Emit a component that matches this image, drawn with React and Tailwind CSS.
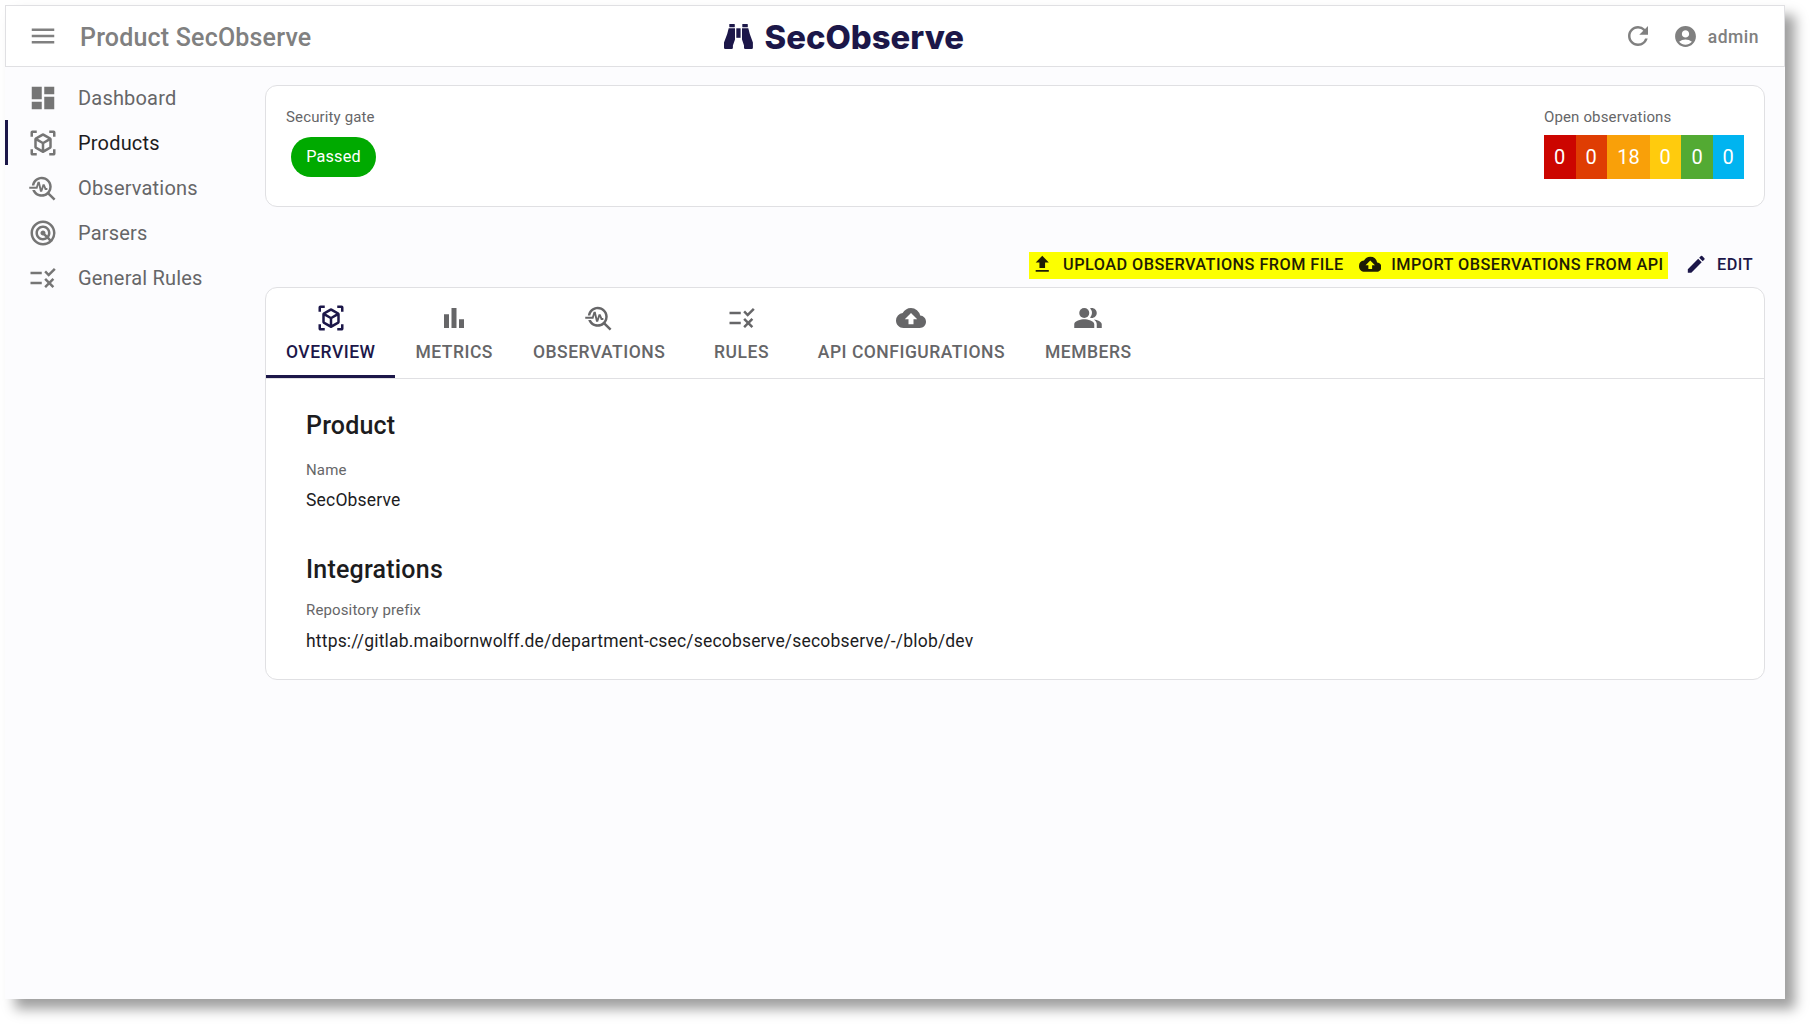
import React from "react";
import {
  MdMenu, MdDashboard, MdViewInAr, MdTroubleshoot, MdRadar, MdRule, MdBarChart,
  MdBackup, MdUpload, MdPeopleAlt, MdEdit, MdRefresh, MdAccountCircle,
} from "react-icons/md";

const NAV = [
  { label: "Dashboard", Icon: MdDashboard },
  { label: "Products", Icon: MdViewInAr, active: true },
  { label: "Observations", Icon: MdTroubleshoot },
  { label: "Parsers", Icon: MdRadar },
  { label: "General Rules", Icon: MdRule },
];

const TABS = [
  { label: "OVERVIEW", Icon: MdViewInAr, active: true },
  { label: "METRICS", Icon: MdBarChart },
  { label: "OBSERVATIONS", Icon: MdTroubleshoot },
  { label: "RULES", Icon: MdRule },
  { label: "API CONFIGURATIONS", Icon: MdBackup },
  { label: "MEMBERS", Icon: MdPeopleAlt },
];

const SEVERITIES = [
  { count: 0, style: "w-8 bg-[#cc0500] pr-px" },
  { count: 0, style: "w-[31px] bg-[#df3d03] pr-px" },
  { count: 18, style: "w-[43px] bg-[#f9a009]" },
  { count: 0, style: "w-[31px] bg-[#ffcb0d] pr-px" },
  { count: 0, style: "w-8 bg-[#53aa33]" },
  { count: 0, style: "w-[31px] bg-[#00b4f0] pr-px" },
];

function Logo() {
  return (
    <svg className="h-[44px] w-[256px]" viewBox="0 0 256 44" fill="#1c1749">
      <rect x="9.3" y="10" width="5.5" height="3.3" rx="0.6" />
      <rect x="22.3" y="10" width="5.5" height="3.3" rx="0.6" />
      <path d="M8.7 14.3H15V25.5L12.9 31.5V33.7Q12.9 35 11.6 35H5.3Q4 35 4 33.7V28.5L7.2 20Z" />
      <path d="M28.3 14.3H22V25.5L24 31.5V33.7Q24 35 25.3 35H31.6Q32.9 35 32.9 33.7V28.5L29.8 20Z" />
      <rect x="16.3" y="14.3" width="4.3" height="9.5" />
      <text
        x="44.5" y="34.7" fontFamily="Inter" fontWeight="800" fontSize="33"
        textLength="199.5" lengthAdjust="spacingAndGlyphs"
      >
        SecObserve
      </text>
    </svg>
  );
}

function Header() {
  return (
    <header className="flex h-[62px] items-center border border-[#e0e0e3] bg-white text-[#808080]">
      <MdMenu className="ml-[22px] size-[30px]" />
      <h1 className="ml-[22px] w-[640px] pt-[4px] text-[25px] font-medium tracking-[0.0075em]">Product SecObserve</h1>
      <Logo />
      <MdRefresh className="ml-auto size-[30px]" />
      <div className="ml-[20px] mr-[25px] flex items-center gap-[10px]">
        <MdAccountCircle className="size-[25px]" />
        <span className="pt-[2px] text-[17.5px] font-medium tracking-[0.02857em]">admin</span>
      </div>
    </header>
  );
}

function Sidebar() {
  return (
    <nav className="w-[260px] shrink-0 pt-2">
      {NAV.map(({ label, Icon, active }) => (
        <a
          key={label}
          className={
            active
              ? "flex h-[45px] items-center border-l-[3px] border-[#1c1749] pl-5 text-[#1c1c1e]"
              : "flex h-[45px] items-center border-l-[3px] border-transparent pl-5 text-[#666668]"
          }
        >
          <Icon className="size-[30px] text-[#757575]" />
          <span className="ml-5 text-[20px] tracking-[0.00938em]">{label}</span>
        </a>
      ))}
    </nav>
  );
}

function StatusCard() {
  return (
    <section className="mt-[18px] flex h-[122px] justify-between rounded-[12px] border border-[#e0e0e3] bg-white px-5 pt-5">
      <div>
        <div className="text-[15px] leading-[22px] tracking-[0.00938em] text-[#666668]">Security gate</div>
        <div className="ml-[5px] mt-[9px] flex h-10 w-[85px] items-center justify-center rounded-full bg-[#00aa00] text-[16.25px] tracking-[0.00938em] text-white">
          Passed
        </div>
      </div>
      <div>
        <div className="text-[15px] leading-[22px] tracking-[0.00938em] text-[#666668]">Open observations</div>
        <div className="mt-[7px] flex h-11 text-[20px] text-white">
          {SEVERITIES.map(({ count, style }, i) => (
            <span key={i} className={"flex items-center justify-center " + style}>{count}</span>
          ))}
        </div>
      </div>
    </section>
  );
}

function Action({ Icon, label }) {
  return (
    <button className="flex h-[26px] items-center gap-[10px]">
      <Icon className="mb-px size-[22.5px]" />
      <span className="whitespace-nowrap pb-[2px] text-[16.25px] font-medium leading-[25px] tracking-[0.02857em]">{label}</span>
    </button>
  );
}

function Toolbar() {
  return (
    <div className="mt-[45px] flex h-[27px] justify-end pr-[12px]">
      <div className="flex w-[639px] gap-[15px] bg-[#fcff00] pl-[2px] text-[#1e1c05]">
        <Action Icon={MdUpload} label="UPLOAD OBSERVATIONS FROM FILE" />
        <Action Icon={MdBackup} label="IMPORT OBSERVATIONS FROM API" />
      </div>
      <div className="ml-[17px] flex text-[#1c1749]">
        <Action Icon={MdEdit} label="EDIT" />
      </div>
    </div>
  );
}

function DetailCard() {
  return (
    <section className="mt-2 h-[393px] rounded-[12px] border border-[#e0e0e3] bg-white">
      <div className="flex h-[91px] border-b border-[#e0e0e3]">
        {TABS.map(({ label, Icon, active }) => (
          <button
            key={label}
            className={
              active
                ? "flex min-w-[112.5px] flex-col items-center border-b-[3px] border-[#1c1749] px-5 pt-[15px] text-[#1c1749]"
                : "flex min-w-[112.5px] flex-col items-center px-5 pt-[15px] text-[#666668]"
            }
          >
            <Icon className="size-[30px]" />
            <span className="mt-[8px] text-[17.5px] font-medium leading-[22px] tracking-[0.02857em]">{label}</span>
          </button>
        ))}
      </div>
      <div className="px-10 text-[#1c1c1e]">
        <h2 className="mt-[30px] text-[25px] font-medium leading-[34px] tracking-[0.0075em]">Product</h2>
        <div className="mt-[16px] text-[15px] leading-[22px] tracking-[0.00938em] text-[#666668]">Name</div>
        <div className="mt-[6px] text-[17.5px] leading-[26px] tracking-[0.0105em]">SecObserve</div>
        <h2 className="mt-[40px] text-[25px] font-medium leading-[34px] tracking-[0.0085em]">Integrations</h2>
        <div className="mt-[12px] text-[15px] leading-[22px] tracking-[0.00938em] text-[#666668]">Repository prefix</div>
        <div className="mt-[7px] text-[17.5px] leading-[26px] tracking-[0.0105em]">
          https://gitlab.maibornwolff.de/department-csec/secobserve/secobserve/-/blob/dev
        </div>
      </div>
    </section>
  );
}

export default function App() {
  return (
    <div className="h-[1024px] w-[1810px] overflow-hidden bg-white pl-[5px] pt-[5px] font-['Roboto',sans-serif]">
      <div className="h-[994px] w-[1780px] bg-[#fcfcfe] shadow-[10px_10px_12px_rgba(0,0,0,0.38)]">
        <Header />
        <div className="flex">
          <Sidebar />
          <main className="w-[1500px]">
            <StatusCard />
            <Toolbar />
            <DetailCard />
          </main>
        </div>
      </div>
    </div>
  );
}
